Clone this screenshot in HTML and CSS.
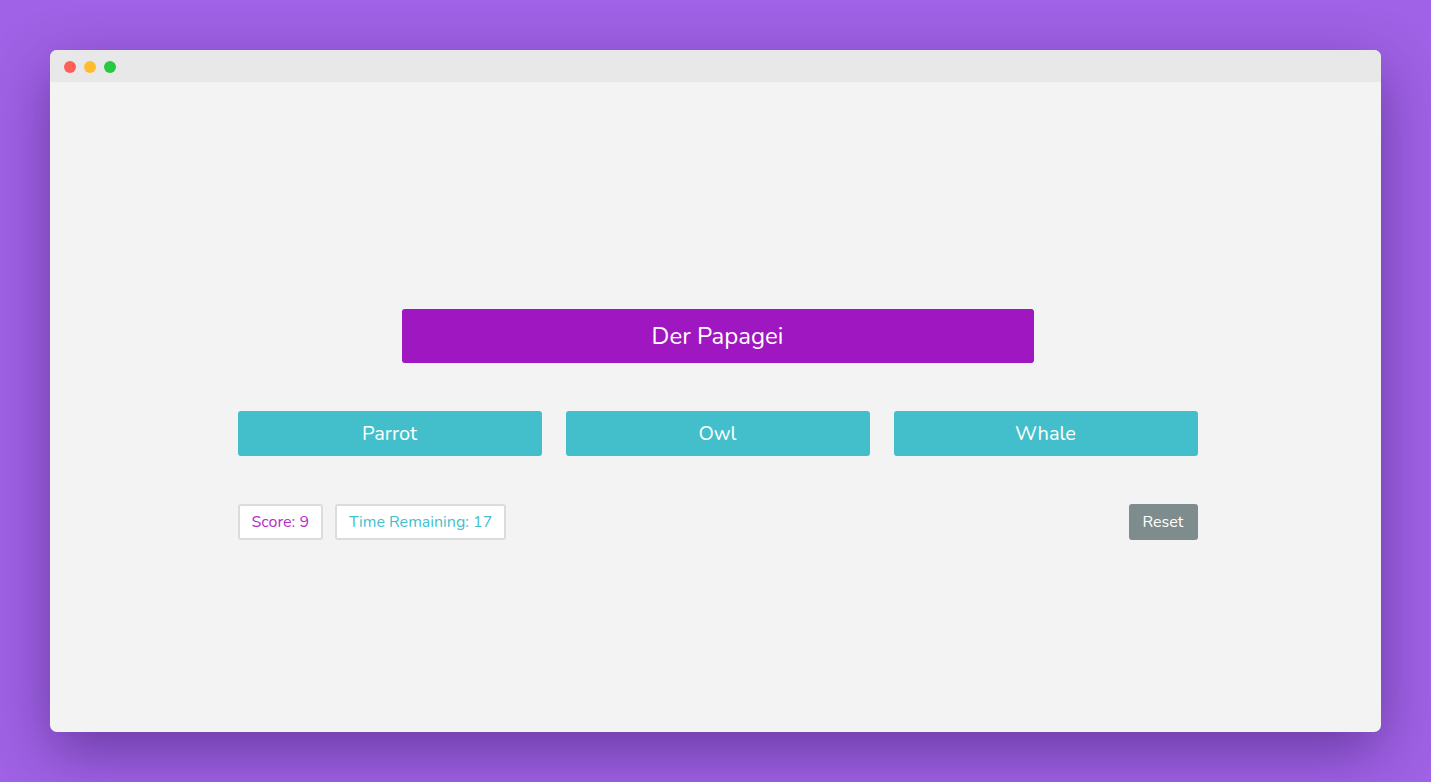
FILE: index.html
```html
<!DOCTYPE html>
<html>
<head>
<meta charset="utf-8">
<link rel="stylesheet" href="styles.css">
</head>
<body>
<div class="window">
  <div class="titlebar">
    <span class="dot red"></span><span class="dot yellow"></span><span class="dot green"></span>
  </div>
  <div class="content">
    <div class="game">
      <div class="word">Der Papagei</div>
      <div class="answers">
        <button class="answer">Parrot</button>
        <button class="answer">Owl</button>
        <button class="answer">Whale</button>
      </div>
      <div class="footer">
        <div class="stats">
          <div class="stat score">Score: 9</div>
          <div class="stat time">Time Remaining: 17</div>
        </div>
        <button class="reset">Reset</button>
      </div>
    </div>
  </div>
</div>
</body>
</html>
```
FILE: styles.css
```css
html, body { margin: 0; padding: 0; }
body {
  width: 1431px; height: 782px;
  background: #a062e6;
  font-family: "Nunito", Lato, "Open Sans", sans-serif;
  padding: 50px;
  box-sizing: border-box;
  overflow: hidden;
}
.window {
  width: 1331px; height: 682px;
  border-radius: 7px;
  overflow: hidden;
  background: #f3f3f3;
  box-shadow: 0 20px 60px rgba(40, 10, 80, 0.45);
  display: flex; flex-direction: column;
}
.titlebar {
  height: 32px;
  box-sizing: border-box;
  padding-top: 2px;
  background: #e8e8e8;
  display: flex; align-items: center;
  padding-left: 14px;
  gap: 8px;
  flex: none;
}
.dot { width: 12px; height: 12px; border-radius: 50%; display: block; }
.red { background: #fe5f57; }
.yellow { background: #febc2e; }
.green { background: #28c840; }
.content { flex: 1; display: flex; justify-content: center; padding-top: 227px; padding-left: 4px; }
.game { width: 960px; display: flex; flex-direction: column; align-items: center; }
.word {
  width: 632px; height: 54px;
  background: #9f17c0; color: #fff;
  border-radius: 3px;
  display: flex; align-items: center; justify-content: center;
  font-size: 24px;
}
.answers { margin-top: 48px; width: 100%; display: flex; gap: 24px; }
.answer {
  flex: 1; height: 45px; border: 0; border-radius: 3px;
  background: #43bfcc; color: #fff;
  font-family: inherit; font-size: 20px;
  padding: 0;
}
.footer { margin-top: 48px; width: 100%; display: flex; justify-content: space-between; align-items: center; }
.stats { display: flex; gap: 12px; }
.stat {
  height: 36px; box-sizing: border-box;
  border: 2px solid #dcdcdc; border-radius: 3px; background: #fff;
  padding: 0 12px;
  display: flex; align-items: center;
  font-size: 16px;
}
.score { color: #b52ccb; }
.time { color: #43bfcc; }
.reset {
  width: 69px; height: 36px; border: 0; border-radius: 3px;
  background: #7f8c8d; color: #fff;
  font-family: inherit; font-size: 16px; padding: 0;
}
```
